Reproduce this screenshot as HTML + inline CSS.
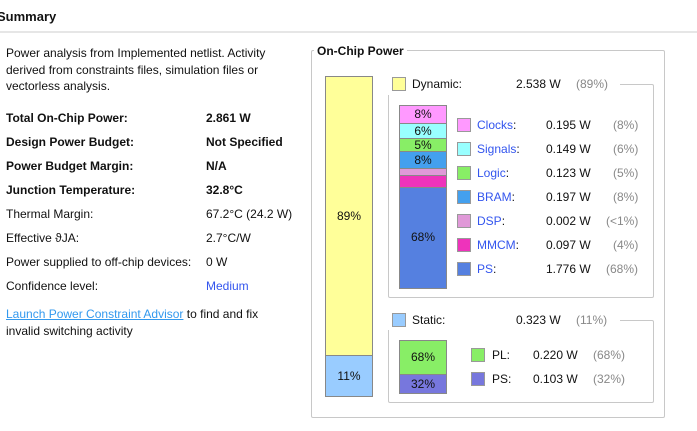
<!DOCTYPE html>
<html><head><meta charset="utf-8"><style>
body{margin:0;width:697px;height:431px;background:#fff;font-family:"Liberation Sans",sans-serif;font-size:12px;color:#111;position:relative;overflow:hidden}
.a{position:absolute;white-space:nowrap}
.b{font-weight:bold}
.sq{position:absolute;width:12px;height:12px;border:1px solid #999}
.seg{position:absolute;left:0;width:100%;text-align:center;box-sizing:border-box}
.lk{color:#3355ee}
.g{color:#888}
</style></head><body>
<div class="a b" style="left:-3px;top:9px;font-size:13px">Summary</div>
<div class="a" style="left:0;top:31px;width:697px;height:2px;background:#e6e6e6"></div>

<div class="a" style="left:6px;top:45px;line-height:16.5px">Power analysis from Implemented netlist. Activity<br>derived from constraints files, simulation files or<br>vectorless analysis.</div>
<div class="a b" style="left:6px;top:111px">Total On-Chip Power:</div><div class="a b" style="left:206px;top:111px">2.861 W</div>
<div class="a b" style="left:6px;top:135px">Design Power Budget:</div><div class="a b" style="left:206px;top:135px">Not Specified</div>
<div class="a b" style="left:6px;top:159px">Power Budget Margin:</div><div class="a b" style="left:206px;top:159px">N/A</div>
<div class="a b" style="left:6px;top:183px">Junction Temperature:</div><div class="a b" style="left:206px;top:183px">32.8°C</div>
<div class="a" style="left:6px;top:207px">Thermal Margin:</div><div class="a" style="left:206px;top:207px">67.2°C (24.2 W)</div>
<div class="a" style="left:6px;top:231px">Effective ϑJA:</div><div class="a" style="left:206px;top:231px">2.7°C/W</div>
<div class="a" style="left:6px;top:255px">Power supplied to off-chip devices:</div><div class="a" style="left:206px;top:255px">0 W</div>
<div class="a" style="left:6px;top:279px">Confidence level:</div><div class="a lk" style="left:206px;top:279px">Medium</div>
<div class="a" style="left:6px;top:306px;line-height:16.5px"><span style="color:#3399ee;text-decoration:underline">Launch Power Constraint Advisor</span> to find and fix<br>invalid switching activity</div>

<div class="a" style="left:311px;top:50px;width:352px;height:366px;border:1px solid #c8c8c8;border-radius:2px"></div>
<div class="a b" style="left:314px;top:44px;background:#fff;padding:0 3px">On-Chip Power</div>

<div class="a" style="left:325px;top:76px;width:46px;height:319px;border:1px solid #888">
<div class="seg" style="top:0;height:278px;background:#ffff99;line-height:278px">89%</div>
<div class="seg" style="top:278px;height:41px;background:#99ccff;border-top:1px solid #888;line-height:40px">11%</div>
</div>

<div class="a" style="left:388px;top:84px;width:264px;height:212px;border:1px solid #c8c8c8;border-radius:2px"></div>
<div class="a" style="left:386px;top:72px;width:234px;height:23px;background:#fff"></div>
<div class="sq" style="left:392px;top:77px;background:#ffff99"></div>
<div class="a" style="left:412px;top:77px">Dynamic:</div>
<div class="a" style="left:516px;top:77px">2.538 W</div>
<div class="a g" style="left:576px;top:77px">(89%)</div>

<div class="a" style="left:399px;top:105px;width:46px;height:182px;border:1px solid #888">
<div class="seg" style="top:0;height:17px;background:#ff99ff;line-height:17px">8%</div>
<div class="seg" style="top:17px;height:15px;background:#99ffff;border-top:1px solid #888;line-height:15px">6%</div>
<div class="seg" style="top:32px;height:13px;background:#88ee66;border-top:1px solid #888;line-height:12px">5%</div>
<div class="seg" style="top:45px;height:17px;background:#44a0ee;border-top:1px solid #888;line-height:16px">8%</div>
<div class="seg" style="top:62px;height:7px;background:#e099d8;border-top:1px solid #888"></div>
<div class="seg" style="top:69px;height:12px;background:#ee33bb;border-top:1px solid #888"></div>
<div class="seg" style="top:81px;height:101px;background:#5580e0;border-top:1px solid #888;padding-top:42px">68%</div>
</div>

<div class="sq" style="left:457px;top:118px;background:#ff99ff"></div><div class="a lk" style="left:477px;top:118px">Clocks<span style="color:#111">:</span></div><div class="a" style="left:546px;top:118px">0.195 W</div><div class="a g" style="left:613px;top:118px">(8%)</div>
<div class="sq" style="left:457px;top:142px;background:#99ffff"></div><div class="a lk" style="left:477px;top:142px">Signals<span style="color:#111">:</span></div><div class="a" style="left:546px;top:142px">0.149 W</div><div class="a g" style="left:613px;top:142px">(6%)</div>
<div class="sq" style="left:457px;top:166px;background:#88ee66"></div><div class="a lk" style="left:477px;top:166px">Logic<span style="color:#111">:</span></div><div class="a" style="left:546px;top:166px">0.123 W</div><div class="a g" style="left:613px;top:166px">(5%)</div>
<div class="sq" style="left:457px;top:190px;background:#44a0ee"></div><div class="a lk" style="left:477px;top:190px">BRAM<span style="color:#111">:</span></div><div class="a" style="left:546px;top:190px">0.197 W</div><div class="a g" style="left:613px;top:190px">(8%)</div>
<div class="sq" style="left:457px;top:214px;background:#e099d8"></div><div class="a lk" style="left:477px;top:214px">DSP<span style="color:#111">:</span></div><div class="a" style="left:546px;top:214px">0.002 W</div><div class="a g" style="left:606px;top:214px">(&lt;1%)</div>
<div class="sq" style="left:457px;top:238px;background:#ee33bb"></div><div class="a lk" style="left:477px;top:238px">MMCM<span style="color:#111">:</span></div><div class="a" style="left:546px;top:238px">0.097 W</div><div class="a g" style="left:613px;top:238px">(4%)</div>
<div class="sq" style="left:457px;top:262px;background:#5580e0"></div><div class="a lk" style="left:477px;top:262px">PS<span style="color:#111">:</span></div><div class="a" style="left:546px;top:262px">1.776 W</div><div class="a g" style="left:606px;top:262px">(68%)</div>

<div class="a" style="left:388px;top:320px;width:264px;height:81px;border:1px solid #c8c8c8;border-radius:2px"></div>
<div class="a" style="left:386px;top:308px;width:234px;height:22px;background:#fff"></div>
<div class="sq" style="left:392px;top:313px;background:#99ccff"></div>
<div class="a" style="left:412px;top:313px">Static:</div>
<div class="a" style="left:516px;top:313px">0.323 W</div>
<div class="a g" style="left:576px;top:313px">(11%)</div>

<div class="a" style="left:399px;top:340px;width:46px;height:52px;border:1px solid #888">
<div class="seg" style="top:0;height:33px;background:#88ee66;line-height:33px">68%</div>
<div class="seg" style="top:33px;height:19px;background:#7777dd;border-top:1px solid #888;line-height:18px">32%</div>
</div>
<div class="sq" style="left:471px;top:348px;background:#88ee66"></div><div class="a" style="left:492px;top:348px">PL:</div><div class="a" style="left:533px;top:348px">0.220 W</div><div class="a g" style="left:593px;top:348px">(68%)</div>
<div class="sq" style="left:471px;top:372px;background:#7777dd"></div><div class="a" style="left:492px;top:372px">PS:</div><div class="a" style="left:533px;top:372px">0.103 W</div><div class="a g" style="left:593px;top:372px">(32%)</div>
</body></html>
